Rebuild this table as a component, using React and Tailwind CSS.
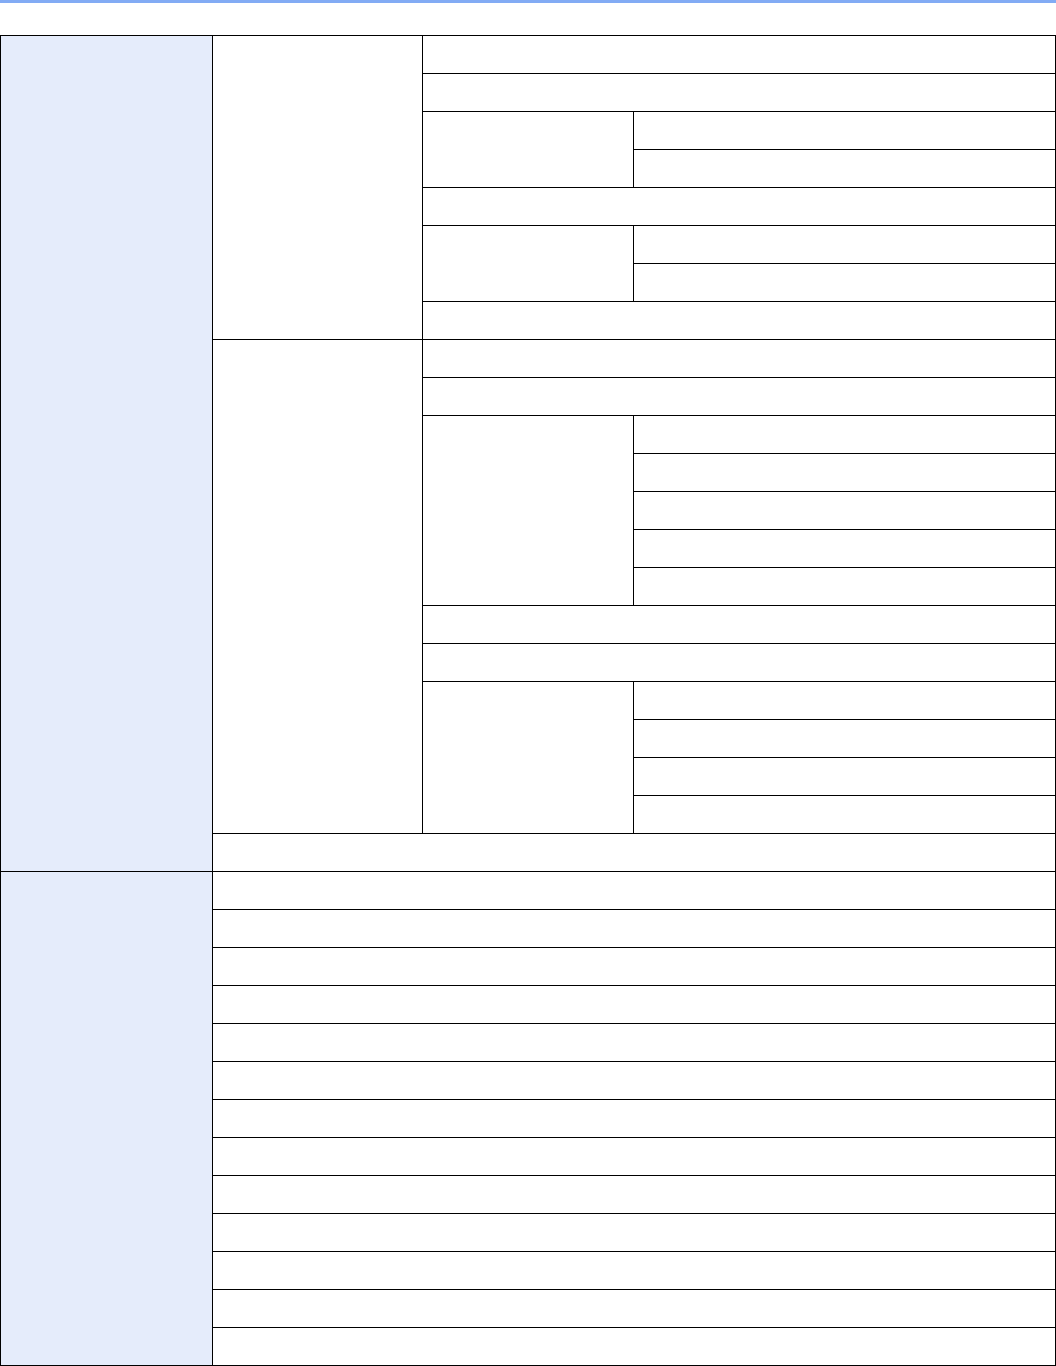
const cell = 'bg-white'
const head = 'bg-[#e5ecfb]'

function Cell({ className = '' }) {
  return <div className={`${cell} ${className}`} />
}

export default function App() {
  return (
    <div className="w-[1056px] h-[1366px] bg-white" style={{ fontFamily: '"Liberation Sans", Arial, sans-serif' }}>
      <div className="h-[3px] bg-[#82abf4]" />
      <div className="mt-[32px] grid grid-cols-[211px_209px_210px_421px] auto-rows-[37px] gap-px bg-black border border-black">
        {/* section 1 */}
        <div className={`${head} row-span-22`} />

        {/* group 1 */}
        <Cell className="row-span-8" />
        <Cell className="col-span-2" />
        <Cell className="col-span-2" />
        <Cell className="row-span-2" />
        <Cell />
        <Cell />
        <Cell className="col-span-2" />
        <Cell className="row-span-2" />
        <Cell />
        <Cell />
        <Cell className="col-span-2" />

        {/* group 2 */}
        <Cell className="row-span-13" />
        <Cell className="col-span-2" />
        <Cell className="col-span-2" />
        <Cell className="row-span-5" />
        <Cell />
        <Cell />
        <Cell />
        <Cell />
        <Cell />
        <Cell className="col-span-2" />
        <Cell className="col-span-2" />
        <Cell className="row-span-4" />
        <Cell />
        <Cell />
        <Cell />
        <Cell />

        <Cell className="col-span-3" />

        {/* section 2 */}
        <div className={`${head} row-span-13`} />
        {Array.from({ length: 13 }, (_, i) => (
          <Cell key={i} className="col-span-3" />
        ))}
      </div>
    </div>
  )
}
